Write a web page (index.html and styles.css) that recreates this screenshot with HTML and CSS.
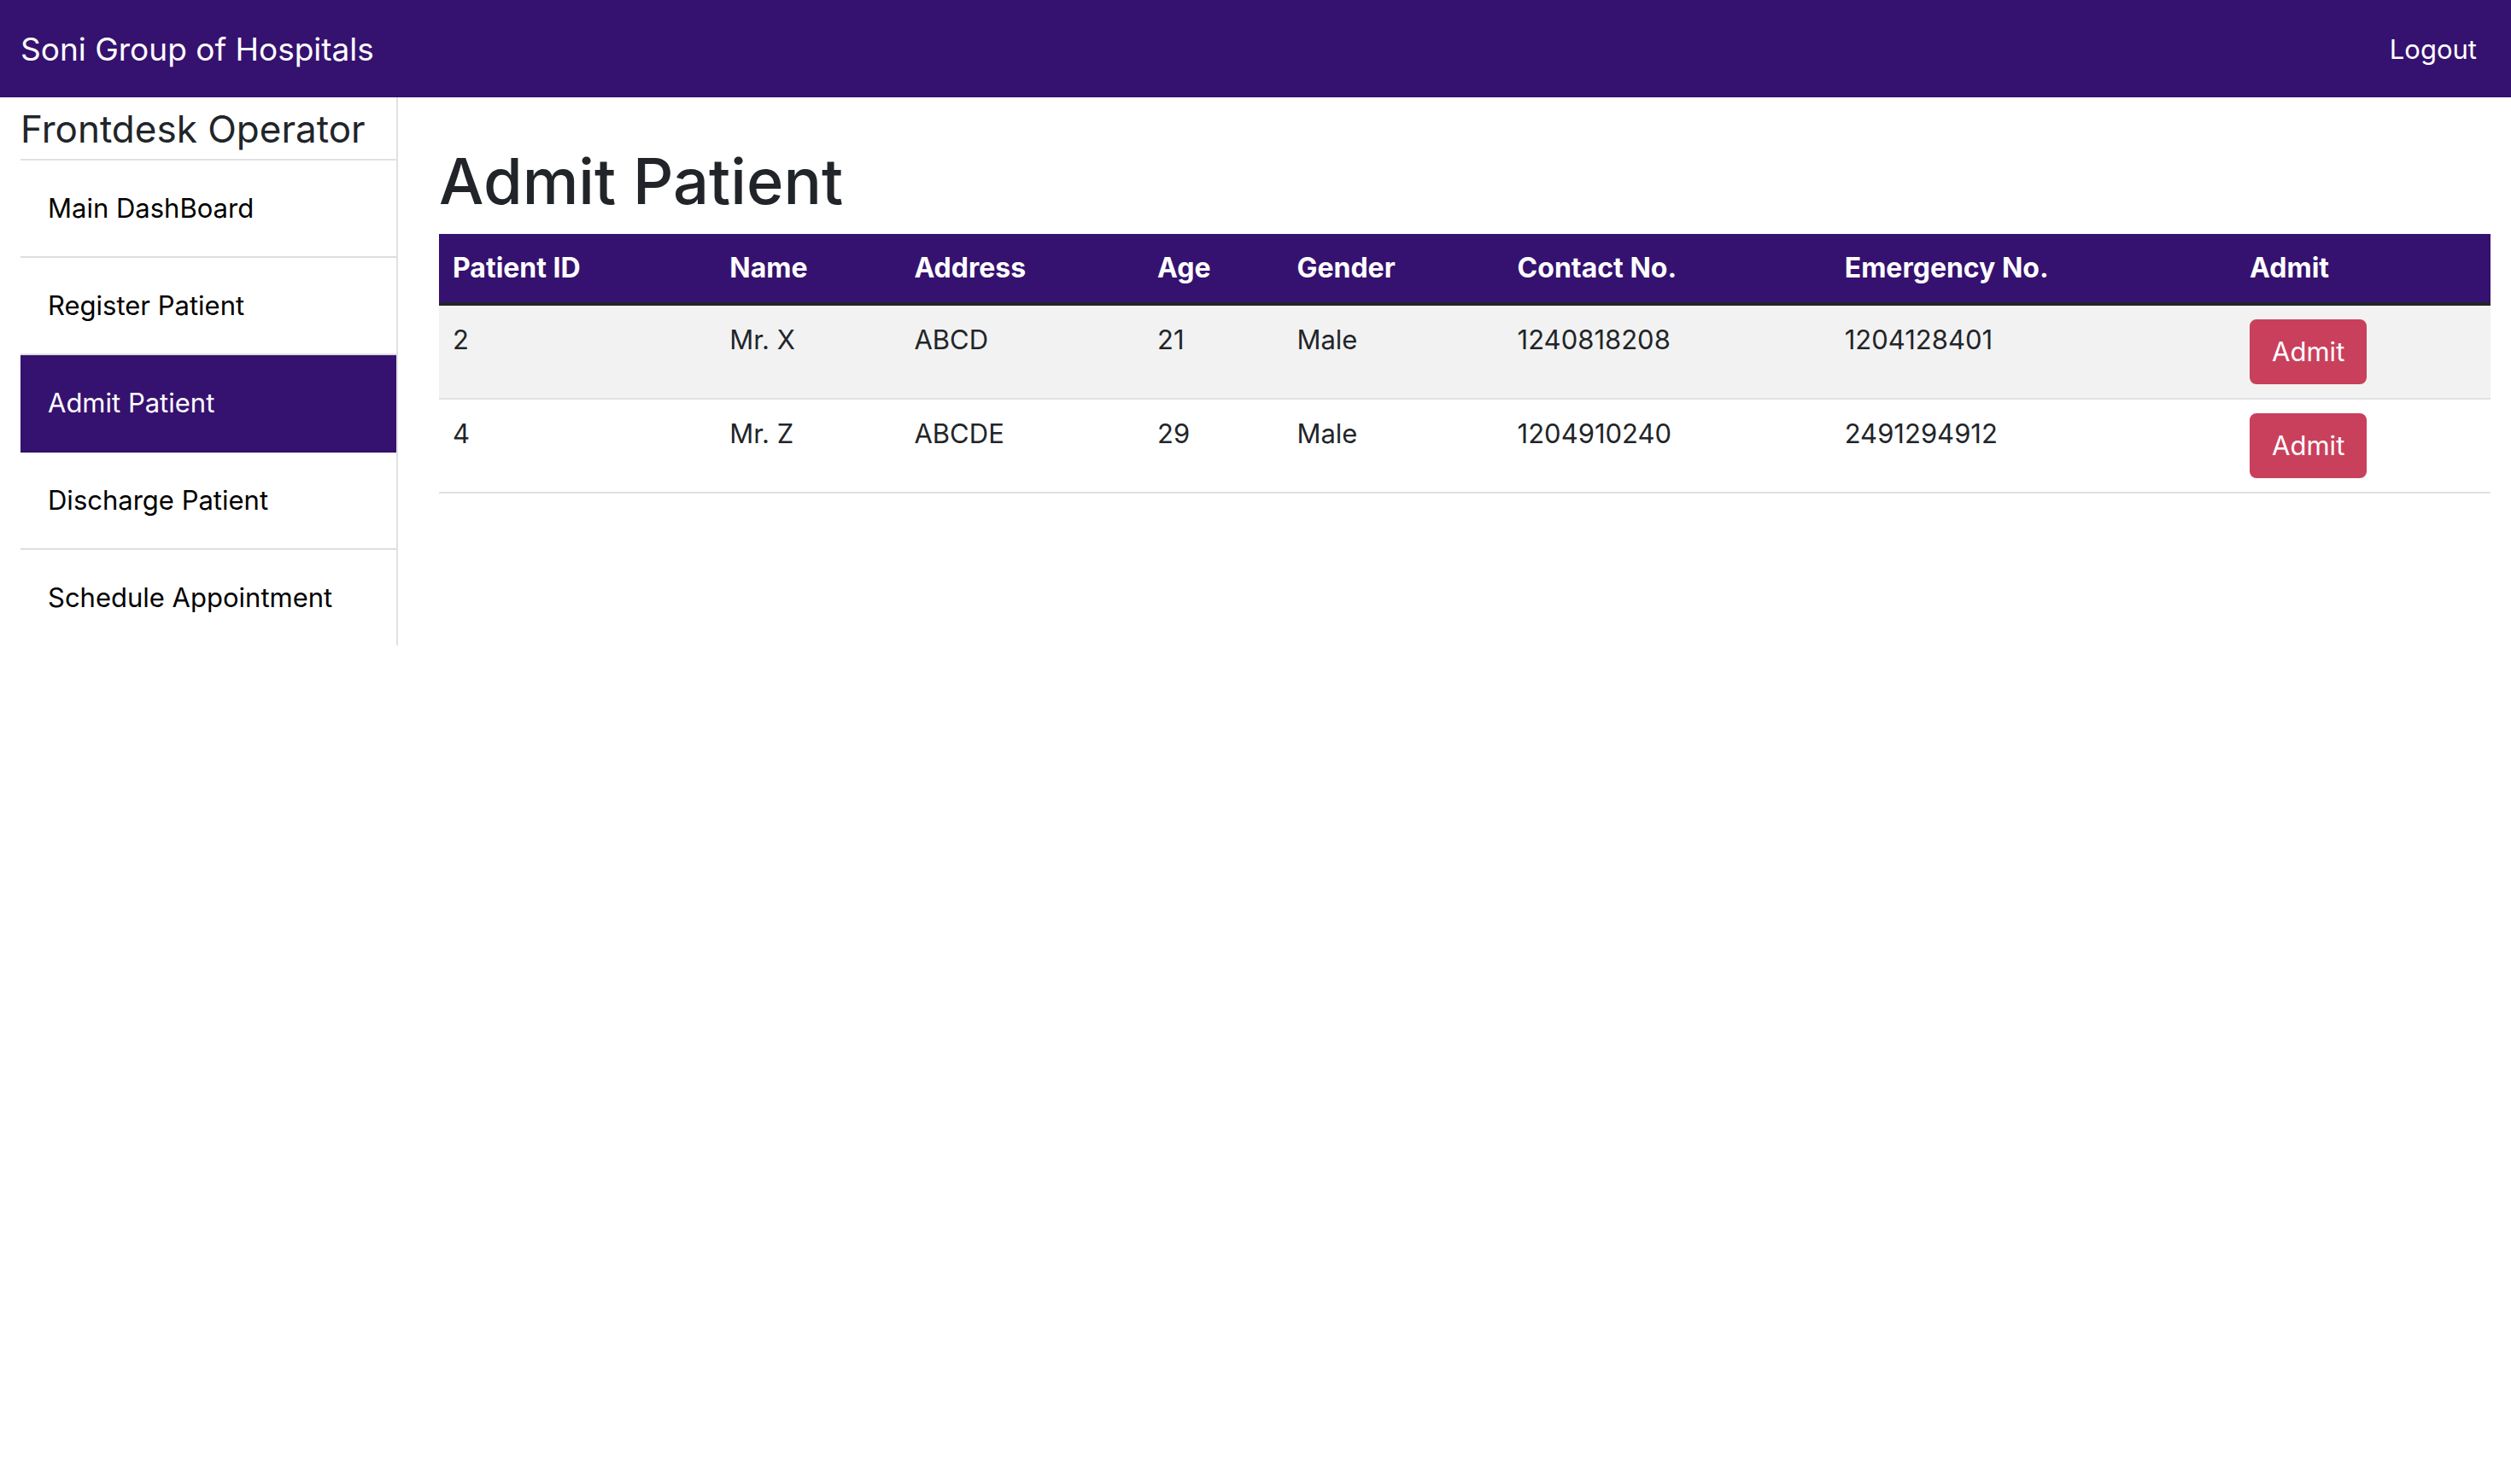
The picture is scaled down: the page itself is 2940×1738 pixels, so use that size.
FILE: index.html
```html
<!DOCTYPE html>
<html lang="en">
<head>
<meta charset="utf-8">
<title>Admit Patient</title>
<link rel="stylesheet" href="styles.css">
</head>
<body>
<nav class="navbar">
  <a class="brand" href="#">Soni Group of Hospitals</a>
  <a class="logout" href="#">Logout</a>
</nav>
<div class="layout">
  <aside class="sidebar">
    <h2 class="role">Frontdesk Operator</h2>
    <ul class="menu">
      <li><a class="menu-link" href="#">Main DashBoard</a></li>
      <li><a class="menu-link" href="#">Register Patient</a></li>
      <li><a class="menu-link active" href="#">Admit Patient</a></li>
      <li><a class="menu-link" href="#">Discharge Patient</a></li>
      <li><a class="menu-link" href="#">Schedule Appointment</a></li>
    </ul>
  </aside>
  <main class="content">
    <h1 class="title">Admit Patient</h1>
    <table class="patients">
      <colgroup>
        <col class="col-id"><col class="col-name"><col class="col-address"><col class="col-age"><col class="col-gender"><col class="col-contact"><col class="col-emergency"><col>
      </colgroup>
      <thead>
        <tr><th>Patient ID</th><th>Name</th><th>Address</th><th>Age</th><th>Gender</th><th>Contact No.</th><th>Emergency No.</th><th>Admit</th></tr>
      </thead>
      <tbody>
        <tr><td>2</td><td>Mr. X</td><td>ABCD</td><td>21</td><td>Male</td><td>1240818208</td><td>1204128401</td><td><button class="btn" type="button">Admit</button></td></tr>
        <tr><td>4</td><td>Mr. Z</td><td>ABCDE</td><td>29</td><td>Male</td><td>1204910240</td><td>2491294912</td><td><button class="btn" type="button">Admit</button></td></tr>
      </tbody>
    </table>
  </main>
</div>
</body>
</html>
```
FILE: styles.css
```css
* { box-sizing: border-box; }

body {
  margin: 0;
  background: #fff;
  color: #212529;
  font-family: Inter, "Liberation Sans", sans-serif;
  font-size: 31px;
  line-height: 48px;
}

a { text-decoration: none; }

.navbar {
  display: flex;
  align-items: center;
  justify-content: space-between;
  padding: 34px 40px 32px 24px;
  background: #35126f;
}

.brand { color: #fff; font-size: 37px; }
.logout { color: #fff; }

.layout { display: flex; align-items: flex-start; }

.sidebar {
  flex: 0 0 466px;
  padding-left: 24px;
  border-right: 2px solid #dee2e6;
}

.role {
  margin: 0;
  padding: 8px 0 6px;
  border-bottom: 2px solid #dee2e6;
  font-size: 44px;
  font-weight: 400;
  line-height: 58px;
  white-space: nowrap;
}

.menu { margin: 0; padding: 0; list-style: none; }

.menu-link {
  display: block;
  padding: 32px;
  border-bottom: 2px solid #dfdfdf;
  color: #000;
}

.menu-link.active { background: #35126f; border-color: #2e1061; color: #fff; }
.menu li:last-child .menu-link { border-bottom: 0; }

.content { flex: 1; padding: 50px 24px 0 48px; }

.title {
  margin: 0 0 14px;
  font-size: 74px;
  font-weight: 500;
  line-height: 96px;
}

.patients { width: 100%; border-collapse: collapse; table-layout: fixed; }

.col-id { width: 13.5%; }
.col-name { width: 9%; }
.col-address { width: 11.85%; }
.col-age { width: 6.8%; }
.col-gender { width: 10.75%; }
.col-contact { width: 15.95%; }
.col-emergency { width: 19.75%; }

th, td { padding: 16px; text-align: left; vertical-align: top; white-space: nowrap; }
th { background: #35126f; border-bottom: 4px solid #212529; color: #fff; font-size: 32px; font-weight: 700; }
td { border-bottom: 2px solid #dee2e6; }
tbody tr:nth-child(odd) { background: #f2f2f2; }

.btn {
  display: block;
  padding: 12px 24px;
  border: 2px solid #c9405c;
  border-radius: 8px;
  background: #c9405c;
  color: #fff;
  font: inherit;
}
```
